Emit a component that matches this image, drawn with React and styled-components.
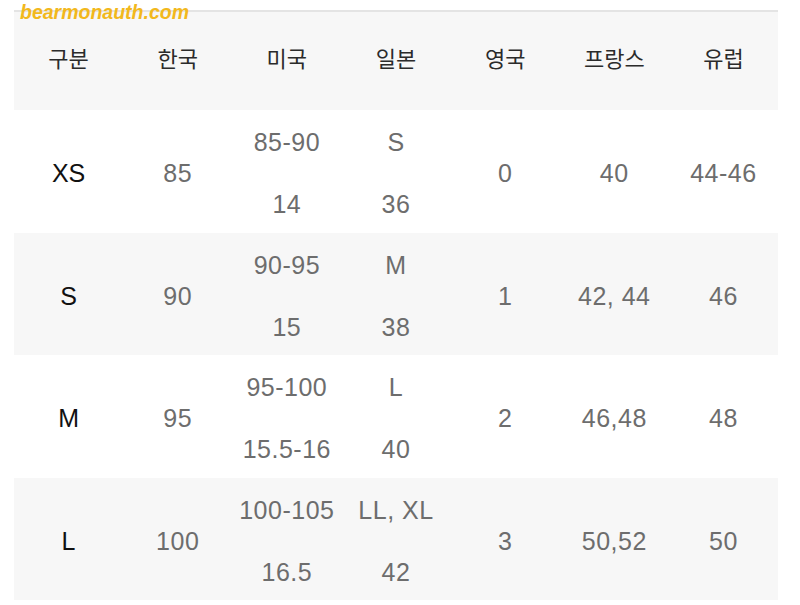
import React from "react";
import styled, { createGlobalStyle } from "styled-components";

const GlobalStyle = createGlobalStyle`
  html, body {
    margin: 0;
    padding: 0;
    background: #ffffff;
  }
`;

const Page = styled.div`
  position: relative;
  width: 800px;
  height: 605px;
  padding: 10px 0 0 14px;
  box-sizing: border-box;
  overflow: hidden;
  font-family: "Liberation Sans", "Noto Sans CJK KR", sans-serif;
`;

const Watermark = styled.div`
  position: absolute;
  left: 20px;
  top: 1px;
  font-family: "Liberation Sans", sans-serif;
  font-weight: bold;
  font-style: italic;
  font-size: 19.5px;
  color: #f2b81c;
`;

const Table = styled.div`
  width: 764px;
  border-top: 2px solid #e4e4e4;
`;

const Row = styled.div`
  display: grid;
  grid-template-columns: repeat(7, 1fr);
  height: ${(p) => p.$h}px;
  background: ${(p) => (p.$shade ? "#f7f7f7" : "#ffffff")};
`;

const HeadCell = styled.div`
  display: flex;
  align-items: center;
  justify-content: center;
  padding-bottom: 8px;
  font-family: "Noto Sans CJK KR", sans-serif;
  font-size: 22px;
  color: #2b2b2b;
`;

const Cell = styled.div`
  display: flex;
  flex-direction: column;
  align-items: center;
  justify-content: center;
  gap: 36px;
  padding-top: 3px;
  font-size: 25px;
  letter-spacing: ${(p) => (p.$label ? "0" : "0.5px")};
  color: ${(p) => (p.$label ? "#111111" : "#6d6d6d")};
`;

const Line = styled.span`
  line-height: 26px;
`;

const heads = ["구분", "한국", "미국", "일본", "영국", "프랑스", "유럽"];

const rows = [
  { size: "XS", kr: "85", us: ["85-90", "14"], jp: ["S", "36"], uk: "0", fr: "40", eu: "44-46", h: 123 },
  { size: "S", kr: "90", us: ["90-95", "15"], jp: ["M", "38"], uk: "1", fr: "42, 44", eu: "46", h: 122 },
  { size: "M", kr: "95", us: ["95-100", "15.5-16"], jp: ["L", "40"], uk: "2", fr: "46,48", eu: "48", h: 123 },
  { size: "L", kr: "100", us: ["100-105", "16.5"], jp: ["LL, XL", "42"], uk: "3", fr: "50,52", eu: "50", h: 122 },
];

export default function App() {
  return (
    <Page>
      <GlobalStyle />
      <Table>
        <Row $h={98} $shade>
          {heads.map((h) => (
            <HeadCell key={h}>{h}</HeadCell>
          ))}
        </Row>
        {rows.map((r, i) => (
          <Row key={r.size} $h={r.h} $shade={i % 2 === 1}>
            <Cell $label>
              <Line>{r.size}</Line>
            </Cell>
            <Cell>
              <Line>{r.kr}</Line>
            </Cell>
            <Cell>
              {r.us.map((t) => (
                <Line key={t}>{t}</Line>
              ))}
            </Cell>
            <Cell>
              {r.jp.map((t) => (
                <Line key={t}>{t}</Line>
              ))}
            </Cell>
            <Cell>
              <Line>{r.uk}</Line>
            </Cell>
            <Cell>
              <Line>{r.fr}</Line>
            </Cell>
            <Cell>
              <Line>{r.eu}</Line>
            </Cell>
          </Row>
        ))}
      </Table>
      <Watermark>bearmonauth.com</Watermark>
    </Page>
  );
}
